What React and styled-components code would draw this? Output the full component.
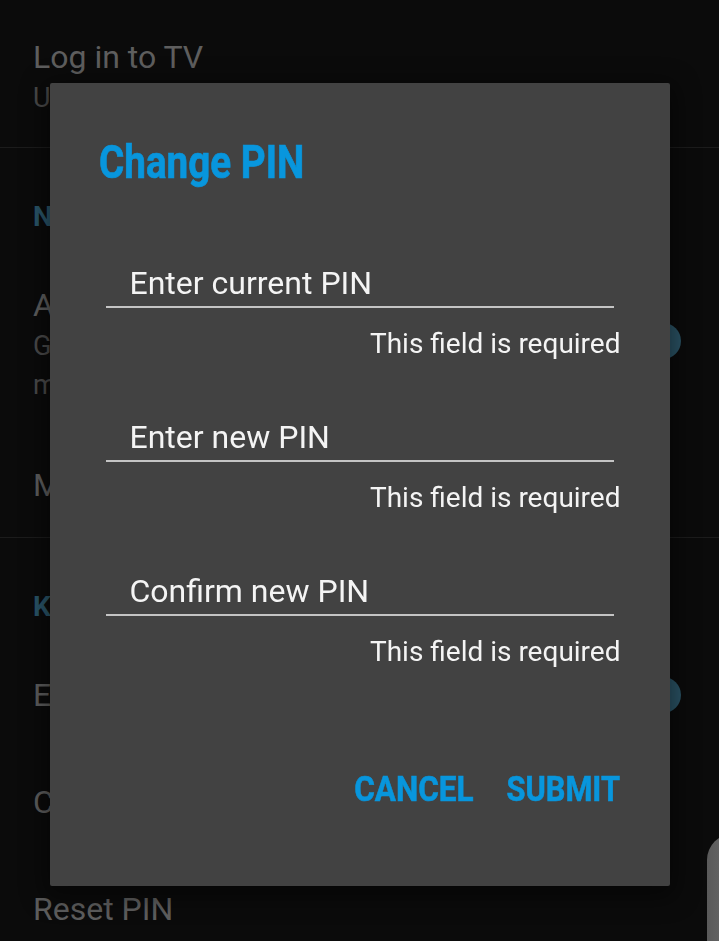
import React from "react";
import styled, { createGlobalStyle } from "styled-components";

const Global = createGlobalStyle`
  html, body { margin: 0; padding: 0; background: #0b0b0b; }
  body { font-family: Roboto, "Noto Sans", sans-serif; overflow: hidden; }
`;

const Screen = styled.div`
  position: relative;
  width: 719px;
  height: 941px;
  background: #0b0b0b;
  overflow: hidden;
`;

const Section = styled.div`
  display: flex;
  flex-direction: column;
  border-bottom: ${(p) => (p.$divider ? "1px solid #1c1c1c" : "none")};
`;

const Header = styled.div`
  padding: 51px 0 17px 33px;
  font-size: 28px;
  line-height: 36px;
  font-weight: 700;
  color: #2a5569;
`;

const Item = styled.div`
  display: flex;
  align-items: center;
  justify-content: space-between;
  padding: ${(p) => p.$pt ?? 33}px 38px ${(p) => p.$pb ?? 33}px 33px;
`;

const ItemText = styled.div`
  display: flex;
  flex-direction: column;
  gap: 3px;
`;

const ItemTitle = styled.div`
  font-size: 32px;
  line-height: 40px;
  color: #5e5e5e;
`;

const ItemSub = styled.div`
  font-size: 27px;
  line-height: 36px;
  color: #4a4a4a;
`;

const Thumb = styled.div`
  width: 36px;
  height: 36px;
  border-radius: 50%;
  background: #2b5466;
  flex: none;
  margin-top: ${(p) => p.$up ? -6 : 0}px;
`;

const Peek = styled.div`
  position: absolute;
  left: 707px;
  top: 834px;
  width: 40px;
  height: 140px;
  border-radius: 26px 0 0 0;
  background: linear-gradient(90deg, #5a5a5a, #727272);
`;

const Overlay = styled.div`
  position: fixed;
  inset: 0;
  display: flex;
  justify-content: center;
  align-items: flex-start;
  padding-top: 83px;
`;

const Dialog = styled.div`
  width: 620px;
  height: 803px;
  box-sizing: border-box;
  background: #424242;
  border-radius: 2px;
  box-shadow: 0 6px 24px 6px rgba(0, 0, 0, 0.45);
  padding: 52px 49px 0 49px;
  display: flex;
  flex-direction: column;
`;

const Title = styled.h2`
  margin: 0 0 74px 0;
  font-size: 46px;
  line-height: 54px;
  font-weight: 700;
  color: #0896dd;
  -webkit-text-stroke: 0.7px #0896dd;
  white-space: nowrap;
`;

const Condensed = styled.span`
  display: inline-block;
  transform: scaleX(${(p) => p.$scale ?? 0.84});
  transform-origin: ${(p) => p.$origin ?? "left"} center;
`;

const Field = styled.div`
  display: flex;
  flex-direction: column;
  margin-bottom: ${(p) => p.$mb}px;
`;

const Input = styled.div`
  margin: 0 7px;
  padding: 0 0 3px 24px;
  border-bottom: 2px solid #c4c4c4;
  font-size: 32px;
  line-height: 40px;
  color: #f4f4f4;
`;

const Helper = styled.div`
  margin-top: 18px;
  text-align: right;
  font-size: 28px;
  line-height: 36px;
  color: #f4f4f4;
`;

const Actions = styled.div`
  display: flex;
  justify-content: flex-end;
  gap: 33px;
`;

const Action = styled.button`
  border: none;
  background: none;
  padding: 0;
  font-family: Roboto, sans-serif;
  font-size: 35px;
  line-height: 44px;
  font-weight: 700;
  color: #0896dd;
  -webkit-text-stroke: 0.6px #0896dd;
  cursor: pointer;
  display: inline-flex;
  justify-content: flex-end;
  width: ${(p) => p.$w}px;
  overflow: visible;
  white-space: nowrap;
`;

export default function App() {
  return (
    <>
      <Global />
      <Screen>
        <Section $divider>
          <Item $pt={37} $pb={31}>
            <ItemText>
              <ItemTitle>Log in to TV</ItemTitle>
              <ItemSub>Use code on TV</ItemSub>
            </ItemText>
          </Item>
        </Section>
        <Section $divider>
          <Header>Notifications</Header>
          <Item>
            <ItemText>
              <ItemTitle>Allow alerts</ItemTitle>
              <ItemSub>Get alerts</ItemSub>
              <ItemSub>messages</ItemSub>
            </ItemText>
            <Thumb $up />
          </Item>
          <Item $pt={29} $pb={32}>
            <ItemText>
              <ItemTitle>Manage</ItemTitle>
            </ItemText>
          </Item>
        </Section>
        <Section>
          <Header>Kids</Header>
          <Item>
            <ItemText>
              <ItemTitle>Enable</ItemTitle>
            </ItemText>
            <Thumb />
          </Item>
          <Item $pt={34}>
            <ItemText>
              <ItemTitle>Change PIN</ItemTitle>
            </ItemText>
          </Item>
          <Item $pt={34}>
            <ItemText>
              <ItemTitle>Reset PIN</ItemTitle>
            </ItemText>
          </Item>
        </Section>
        <Peek />
      </Screen>
      <Overlay>
        <Dialog>
          <Title>
            <Condensed>Change PIN</Condensed>
          </Title>
          <Field $mb={55}>
            <Input>Enter current PIN</Input>
            <Helper>This field is required</Helper>
          </Field>
          <Field $mb={55}>
            <Input>Enter new PIN</Input>
            <Helper>This field is required</Helper>
          </Field>
          <Field $mb={98}>
            <Input>Confirm new PIN</Input>
            <Helper>This field is required</Helper>
          </Field>
          <Actions>
            <Action $w={120}>
              <Condensed $scale={0.9} $origin="right">CANCEL</Condensed>
            </Action>
            <Action $w={114}>
              <Condensed $scale={0.88} $origin="right">SUBMIT</Condensed>
            </Action>
          </Actions>
        </Dialog>
      </Overlay>
    </>
  );
}
